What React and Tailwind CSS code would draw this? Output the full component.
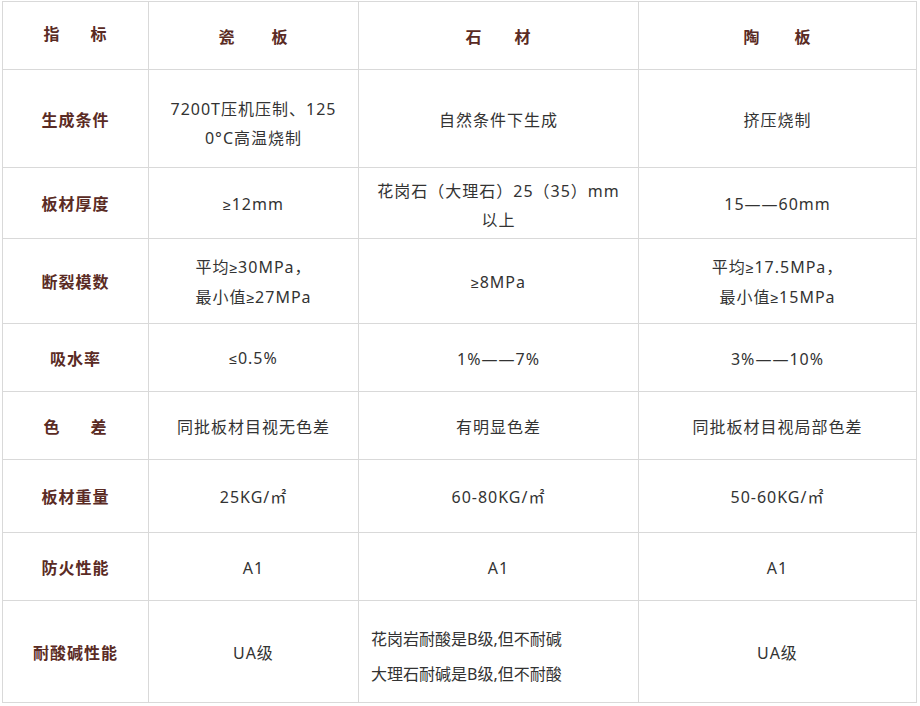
import React from 'react';

const rows = [
  { label: '生成条件', h: 98, pad: 'pt-[10px]', cells: [['7200T压机压制、125', '0°C高温烧制'], ['自然条件下生成'], ['挤压烧制']] },
  { label: '板材厚度', h: 71, pad: 'pt-[5px]', cells: [['≥12mm'], ['花岗石（大理石）25（35）mm', '以上'], ['15——60mm']] },
  { label: '断裂模数', h: 85, pad: 'pt-[4px]', cells: [['平均≥30MPa，', '最小值≥27MPa'], ['≥8MPa'], ['平均≥17.5MPa，', '最小值≥15MPa']] },
  { label: '吸水率', h: 68, pad: 'pt-[3px]', cells: [['≤0.5%'], ['1%——7%'], ['3%——10%']] },
  { label: ['色', '差'], h: 68, pad: 'pt-[3px]', cells: [['同批板材目视无色差'], ['有明显色差'], ['同批板材目视局部色差']] },
  { label: '板材重量', h: 73, pad: 'pt-[3px]', cells: [['25KG/㎡'], ['60-80KG/㎡'], ['50-60KG/㎡']] },
  { label: '防火性能', h: 68, pad: 'pt-[3px]', cells: [['A1'], ['A1'], ['A1']] },
];

const Spaced = ({ chars, gap }) => (
  <span className="inline-flex justify-center" style={{ gap }}>
    {chars.map((c, i) => <span key={i}>{c}</span>)}
  </span>
);

// ≥ / ≤ drawn narrow, like the source
const Line = ({ text }) => (
  <div>
    {text.split(/([≥≤])/).map((p, i) =>
      p === '≥' || p === '≤' ? (
        <span key={i} className="text-[14px] tracking-[0px] mr-[1px]" style={{ fontFamily: '"Liberation Sans", sans-serif' }}>{p}</span>
      ) : (
        <span key={i}>{p}</span>
      )
    )}
  </div>
);

export default function App() {
  const font = { fontFamily: '"Noto Sans", "Noto Sans CJK SC", sans-serif' };
  const border = 'border border-[#d9d9d9]';
  const label = 'text-[16px] font-bold tracking-[1px] text-[#5a2b24]';
  const body = 'text-[16px] tracking-[1px] text-[#333333] leading-[29px]';

  return (
    <div className="bg-white w-[920px] h-[706px] pl-[2px] pt-[1px]" style={font}>
      <table className="border-collapse table-fixed w-[914px]">
        <colgroup>
          <col className="w-[146px]" />
          <col className="w-[210px]" />
          <col className="w-[280px]" />
          <col className="w-[278px]" />
        </colgroup>
        <tbody>
          <tr className="h-[68px]">
            <td className={`${border} ${label} text-center align-middle pb-[4px]`}>
              <Spaced chars={['指', '标']} gap="30px" />
            </td>
            <td className={`${border} ${label} text-center align-middle pt-[2px]`}>
              <Spaced chars={['瓷', '板']} gap="36px" />
            </td>
            <td className={`${border} ${label} text-center align-middle pt-[2px]`}>
              <Spaced chars={['石', '材']} gap="32px" />
            </td>
            <td className={`${border} ${label} text-center align-middle pt-[2px]`}>
              <Spaced chars={['陶', '板']} gap="34px" />
            </td>
          </tr>
          {rows.map((r, i) => (
            <tr key={i} style={{ height: r.h }}>
              <td className={`${border} ${label} text-center align-middle pt-[2px]`}>
                {Array.isArray(r.label) ? <Spaced chars={r.label} gap="30px" /> : r.label}
              </td>
              {r.cells.map((lines, j) => (
                <td key={j} className={`${border} ${body} ${lines.length > 1 ? r.pad : 'pt-[3px]'} text-center align-middle whitespace-nowrap`}>
                  {lines.map((l, k) => <Line key={k} text={l} />)}
                </td>
              ))}
            </tr>
          ))}
          <tr className="h-[102px]">
            <td className={`${border} ${label} text-center align-middle pt-[2px]`}>耐酸碱性能</td>
            <td className={`${border} ${body} text-center align-middle pt-[3px]`}>UA级</td>
            <td className={`${border} text-[16px] text-[#333333] align-middle pl-[12px] pt-[10px] leading-[35px] whitespace-nowrap`}>
              <div>花岗岩耐酸是B级,但不耐碱</div>
              <div>大理石耐碱是B级,但不耐酸</div>
            </td>
            <td className={`${border} ${body} text-center align-middle pt-[3px]`}>UA级</td>
          </tr>
        </tbody>
      </table>
    </div>
  );
}
